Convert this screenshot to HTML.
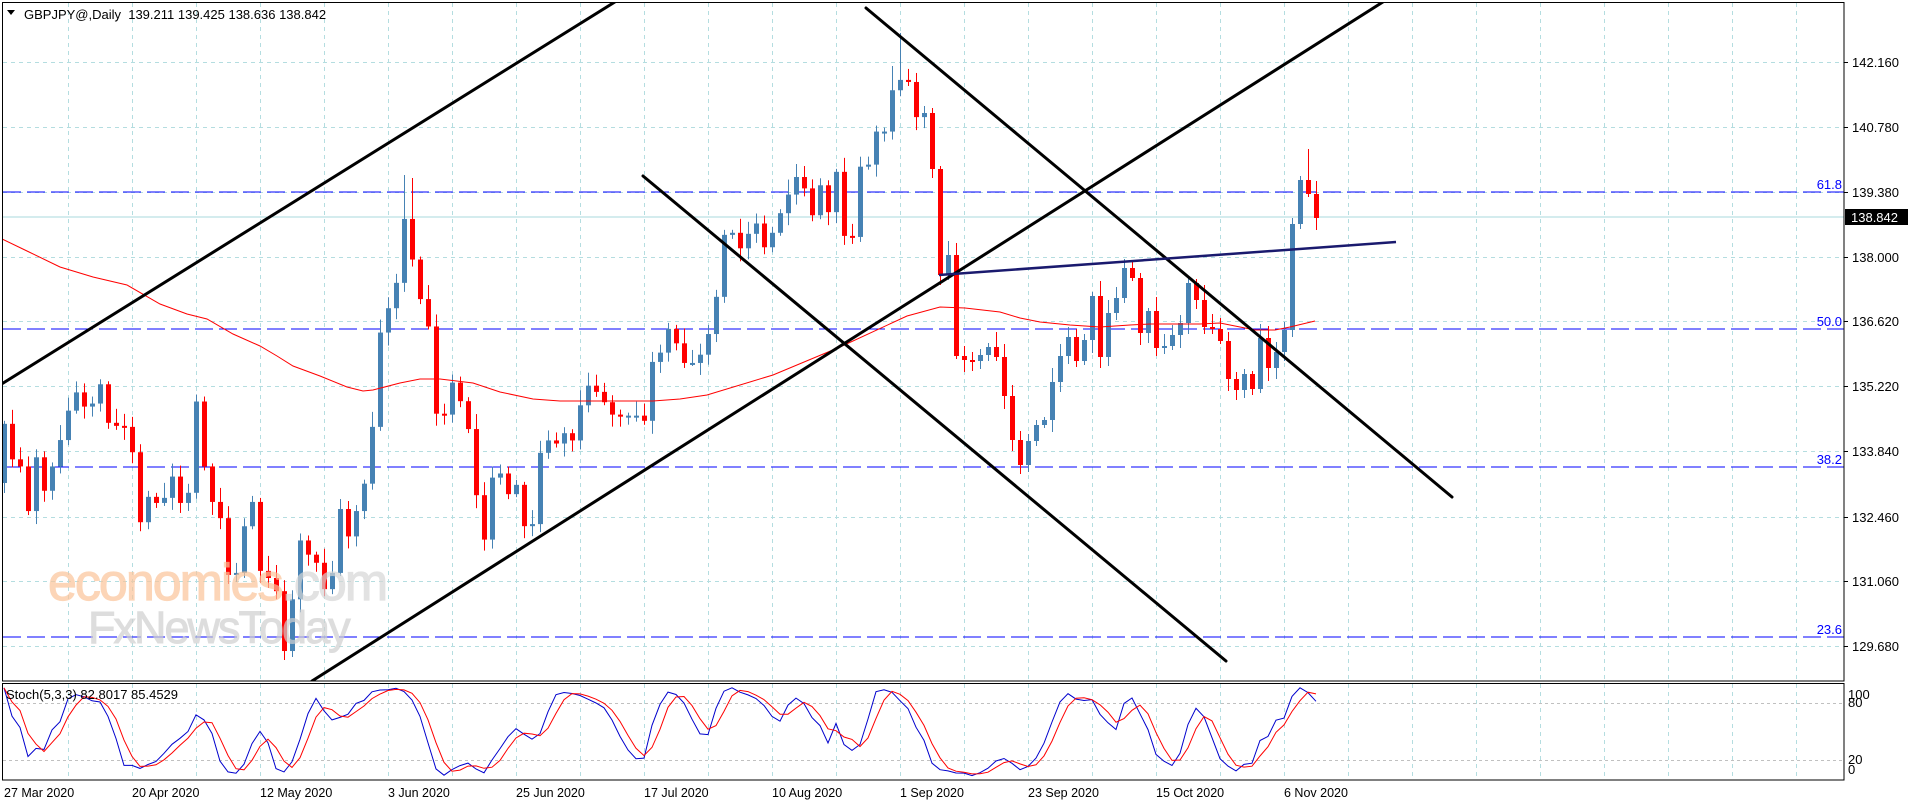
<!DOCTYPE html>
<html><head><meta charset="utf-8">
<style>
html,body{margin:0;padding:0;background:#fff;}
body{width:1916px;height:807px;overflow:hidden;font-family:"Liberation Sans",sans-serif;}
svg text{font-family:"Liberation Sans",sans-serif;}
</style></head>
<body>
<svg id="c" width="1916" height="807" xmlns="http://www.w3.org/2000/svg">
<defs>
<clipPath id="pc"><rect x="3" y="3" width="1841" height="678"/></clipPath>
<clipPath id="sc"><rect x="3" y="684" width="1841" height="96"/></clipPath>
</defs>
<rect width="1916" height="807" fill="#fff"/>
<g id="grid"></g>
<g stroke="#0000ff" stroke-width="1" stroke-dasharray="18,6">
<line x1="3" y1="192" x2="1844" y2="192"/>
<line x1="3" y1="329" x2="1844" y2="329"/>
<line x1="3" y1="467" x2="1844" y2="467"/>
<line x1="3" y1="637" x2="1844" y2="637"/>
</g>
<g fill="#0000ff" font-size="13" text-anchor="end">
<text x="1842" y="189">61.8</text>
<text x="1842" y="326">50.0</text>
<text x="1842" y="464">38.2</text>
<text x="1842" y="634">23.6</text>
</g>
<line x1="3" y1="217" x2="1844" y2="217" stroke="#a8d8dc" stroke-width="1"/>
<g id="candles" clip-path="url(#pc)"></g>
<g font-size="52" opacity="0.7" stroke-width="1.2">
<text x="48" y="600" fill="#fcc49a" stroke="#fcc49a" letter-spacing="-2">economies<tspan fill="#d6d6d6" stroke="#d6d6d6">.com</tspan></text>
</g>
<text x="88" y="643" font-size="45" fill="#d0d0d0" stroke="#d0d0d0" stroke-width="1" opacity="0.7" letter-spacing="-2">FxNewsToday</text>
<polyline id="ma" fill="none" stroke="#ff0000" stroke-width="1" clip-path="url(#pc)"/>
<g clip-path="url(#pc)" stroke="#000" stroke-width="3" stroke-linecap="round">
<line x1="0" y1="385" x2="618" y2="0"/>
<line x1="312" y1="681" x2="1386" y2="0"/>
<line x1="643" y1="176" x2="1226" y2="661"/>
<line x1="866" y1="8" x2="1452" y2="497"/>
</g>
<line x1="939" y1="275" x2="1396" y2="242" stroke="#1a1a6e" stroke-width="2.5"/>
<rect x="2.5" y="2.5" width="1841.5" height="678.5" fill="none" stroke="#000" stroke-width="1"/>
<rect x="2.5" y="683.5" width="1841.5" height="96.5" fill="none" stroke="#000" stroke-width="1"/>
<g stroke="#c0c0c0" stroke-dasharray="3,3"><line x1="3" y1="703.5" x2="1844" y2="703.5"/><line x1="3" y1="760.5" x2="1844" y2="760.5"/></g>
<g clip-path="url(#sc)"><polyline id="sk" fill="none" stroke="#0000cd" stroke-width="1"/><polyline id="sd" fill="none" stroke="#ff0000" stroke-width="1"/></g>
<path d="M7 10 L15 10 L11 15 Z" fill="#000"/>
<text x="24" y="19" font-size="13" fill="#000">GBPJPY@,Daily&#160;&#160;139.211 139.425 138.636 138.842</text>
<text x="6" y="699" font-size="13" fill="#000">Stoch(5,3,3) 82.8017 85.4529</text>
<g id="axis" font-size="13" fill="#000"></g>
<rect x="1845" y="209" width="63" height="16" fill="#000"/>
<text x="1851" y="222" font-size="13" fill="#fff">138.842</text>
<g font-size="13" fill="#000">
<text x="1848" y="699">100</text><text x="1848" y="707">80</text>
<text x="1848" y="764">20</text><text x="1848" y="774">0</text>
</g>
<g id="dates" font-size="12.5" fill="#000"></g>
</svg>
<script>
(function(){
var NS="http://www.w3.org/2000/svg";
function el(t,a,p){var e=document.createElementNS(NS,t);for(var k in a)e.setAttribute(k,a[k]);(p||document.getElementById('c')).appendChild(e);return e;}
var g=document.getElementById('grid');
var hy=[62,127,192,257,321,386,451,517,581,646];
hy.forEach(function(y){el('line',{x1:3,y1:y+.5,x2:1844,y2:y+.5,stroke:'#b4dde0','stroke-dasharray':'4,4'},g);});
for(var k=1;k<=28;k++){var x=4+64*k+.5;el('line',{x1:x,y1:3,x2:x,y2:681,stroke:'#b4dde0','stroke-dasharray':'4,4'},g);el('line',{x1:x,y1:684,x2:x,y2:780,stroke:'#b4dde0','stroke-dasharray':'4,4'},g);}
var ax=document.getElementById('axis');
var pl=["142.160","140.780","139.380","138.000","136.620","135.220","133.840","132.460","131.060","129.680"];
for(var i=0;i<pl.length;i++){el('line',{x1:1844,y1:hy[i]+.5,x2:1848,y2:hy[i]+.5,stroke:'#000'},ax);var t=el('text',{x:1852,y:hy[i]+5},ax);t.textContent=pl[i];}
var dl=["27 Mar 2020","20 Apr 2020","12 May 2020","3 Jun 2020","25 Jun 2020","17 Jul 2020","10 Aug 2020","1 Sep 2020","23 Sep 2020","15 Oct 2020","6 Nov 2020"];
var dg=document.getElementById('dates');
for(var i=0;i<dl.length;i++){var t=el('text',{x:4+128*i,y:797},dg);t.textContent=dl[i];}
var C=[420,455,462,506,453,486,462,436,407,389,403,400,381,419,422,423,448,517,492,498,493,472,498,488,398,462,497,513,569,567,521,497,565,572,585,644,593,535,549,557,583,567,504,531,506,479,423,330,306,281,218,258,297,324,410,
402,371,389,416,480,523,463,459,479,470,510,508,439,427,430,420,427,393,374,380,390,402,404,403,403,408,351,342,319,333,352,352,344,324,288,228,226,241,227,217,240,226,207,189,172,183,209,180,206,167,229,230,162,160,128,128,88,78,80,114,
113,169,275,255,356,360,361,355,347,357,396,440,465,441,425,420,382,356,337,361,340,296,357,313,298,268,278,333,311,348,346,335,323,283,300,327,329,341,379,390,374,389,338,368,352,330,224,180,194,218];
for(var i=0;i<C.length;i++){if(i<=54)C[i]=150+(C[i]-150)*1.0142;else if(i<=114)C[i]=20+(C[i]-20)*1.033;}
var O=[];for(var i=0;i<C.length;i++)O[i]=i==0?483:C[i-1];
var H=[],L=[];
for(var i=0;i<C.length;i++){var w1=3+((i*37)%13),w2=3+((i*53+7)%11);H[i]=Math.min(O[i],C[i])-w1;L[i]=Math.max(O[i],C[i])+w2;}
H[112]=33;H[50]=175;H[51]=178;H[163]=149;L[35]=660;L[36]=657;H[111]=66;L[117]=285;
var cg=document.getElementById('candles');
for(var i=0;i<C.length;i++){var x=4+8*i;var up=C[i]<=O[i];var col=up?'#4682b4':'#ff0000';
el('rect',{x:x,y:H[i],width:1,height:L[i]-H[i],fill:col},cg);
var bt=Math.min(O[i],C[i]),bh=Math.max(2,Math.abs(O[i]-C[i]));
el('rect',{x:x-2,y:bt,width:5,height:bh,fill:col},cg);}
var ma=[[0,238],[27,251],[60,267],[93,277],[127,285],[160,304],[187,314],[207,319],[233,334],[260,346],[277,356],[293,366],[320,376],[347,387],[363,391],[373,390],[400,383],[420,379],[440,379],[473,383],[500,392],[533,399],[560,401],[653,401],[680,399],[707,395],[773,375],[840,347],[907,316],[940,307],[965,308],[1000,312],[1020,318],[1040,322],[1070,325],[1100,327],[1130,325],[1150,324],[1200,324],[1220,323],[1240,327],[1255,330],[1275,330],[1290,327],[1315,321]];
document.getElementById('ma').setAttribute('points',ma.map(function(p){return p.join(',')}).join(' '));
var K=[],Dd=[],kp=[],dp=[],num=[],den=[];
for(var i=0;i<C.length;i++){var s=Math.max(0,i-4),hh=1e9,ll=-1e9;for(var j=s;j<=i;j++){hh=Math.min(hh,H[j]);ll=Math.max(ll,L[j]);}num[i]=ll-C[i];den[i]=ll-hh;}
for(var i=0;i<C.length;i++){var a=0,b=0;for(var j=Math.max(0,i-2);j<=i;j++){a+=num[j];b+=den[j];}K[i]=b?a/b*100:50;}
for(var i=0;i<C.length;i++){var a=0,n=0;for(var j=Math.max(0,i-2);j<=i;j++){a+=K[j];n++;}Dd[i]=a/n;}
function sy(v){return 779-v*0.95;}
for(var i=0;i<C.length;i++){kp.push((4+8*i)+','+sy(K[i]).toFixed(1));dp.push((4+8*i)+','+sy(Dd[i]).toFixed(1));}
document.getElementById('sk').setAttribute('points',kp.join(' '));
document.getElementById('sd').setAttribute('points',dp.join(' '));
})();
</script>
</body></html>
